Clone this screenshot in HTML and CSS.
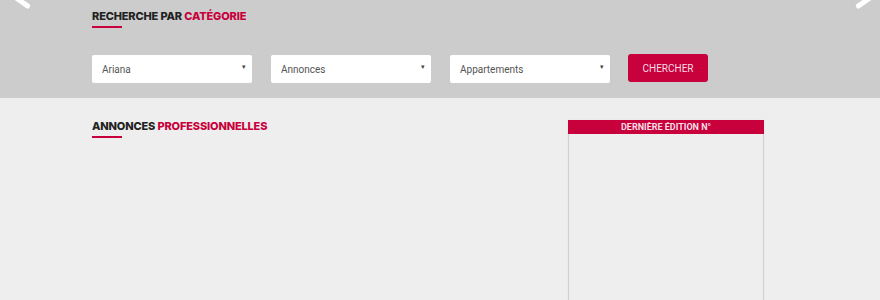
FILE: index.html
```html
<!DOCTYPE html>
<html>
<head>
    <meta charset="UTF-8">
    <title>Recherche par catégorie</title>
    <link rel="stylesheet" href="styles.css">
</head>
<body>
    <div id="search">
        <span class="arrow arrow-left"></span>
        <span class="arrow arrow-right"></span>
        <div class="wrap">
            <h2 class="title">RECHERCHE PAR <span>CATÉGORIE</span></h2>
            <form class="search-form">
                <div class="select-box">
                    <select><option>Ariana</option></select>
                </div>
                <div class="select-box">
                    <select><option>Annonces</option></select>
                </div>
                <div class="select-box">
                    <select><option>Appartements</option></select>
                </div>
                <button type="button">CHERCHER</button>
            </form>
        </div>
    </div>
    <div class="wrap main">
        <div class="listing">
            <h2 class="title">ANNONCES <span>PROFESSIONNELLES</span></h2>
        </div>
        <div class="sidebar">
            <div class="sidebar-head">DERNIÈRE ÉDITION N°</div>
        </div>
    </div>
</body>
</html>
```

FILE: styles.css
```css
body {
    margin: 0;
    background: #eeeeee;
    font-family: Roboto, Arial, sans-serif;
    height: 300px;
    overflow: hidden;
}
#search {
    position: relative;
    height: 98px;
    background: #cccccc;
    overflow: hidden;
}
.wrap {
    padding: 0 116px 0 92px;
}
.title {
    margin: 0;
    padding-top: 10px;
    font-family: Inter, sans-serif;
    font-weight: 800;
    font-size: 11px;
    line-height: 12px;
    color: #222;
    letter-spacing: -0.15px;
}
.title span {
    color: #c8003c;
}
.title::after {
    content: "";
    display: block;
    width: 30px;
    height: 2px;
    margin-top: 4px;
    background: #c8003c;
}
.search-form {
    display: flex;
    align-items: center;
    gap: 19px;
    margin-top: 27px;
}
.select-box {
    position: relative;
    width: 160px;
    height: 28px;
    background: #fff;
    border-radius: 2px;
}
.select-box::after {
    content: "▾";
    position: absolute;
    right: 6px;
    top: 8px;
    font-size: 7px;
    color: #444;
}
select {
    -webkit-appearance: none;
    appearance: none;
    width: 100%;
    height: 28px;
    padding: 0 0 0 10px;
    border: none;
    background: transparent;
    font-family: Roboto, Arial, sans-serif;
    font-size: 10px;
    color: #555;
}
button {
    width: 80px;
    height: 28px;
    margin-left: -1px;
    margin-top: -2px;
    border: none;
    border-radius: 3px;
    background: #c8003c;
    color: #f3dde3;
    font-family: Roboto, Arial, sans-serif;
    font-size: 10px;
}
.arrow {
    position: absolute;
    width: 5px;
    height: 22px;
    background: #fff;
    border-radius: 2px;
}
.arrow-left {
    left: 18px;
    top: -10px;
    transform: rotate(-55deg);
}
.arrow-right {
    left: 863px;
    top: -10px;
    transform: rotate(55deg);
}
.main {
    display: flex;
    justify-content: space-between;
}
.listing {
    padding-top: 12px;
}
.sidebar {
    width: 194px;
    height: 190px;
    margin-top: 22px;
    border: 1px solid #cfcfcf;
    border-top: none;
    box-shadow: 0 0 1px rgba(0, 0, 0, 0.08);
}
.sidebar-head {
    margin: 0 -1px;
    height: 14px;
    line-height: 14px;
    background: #c8003c;
    color: #f5dfe5;
    text-align: center;
    font-size: 9px;
    font-weight: bold;
}
```
